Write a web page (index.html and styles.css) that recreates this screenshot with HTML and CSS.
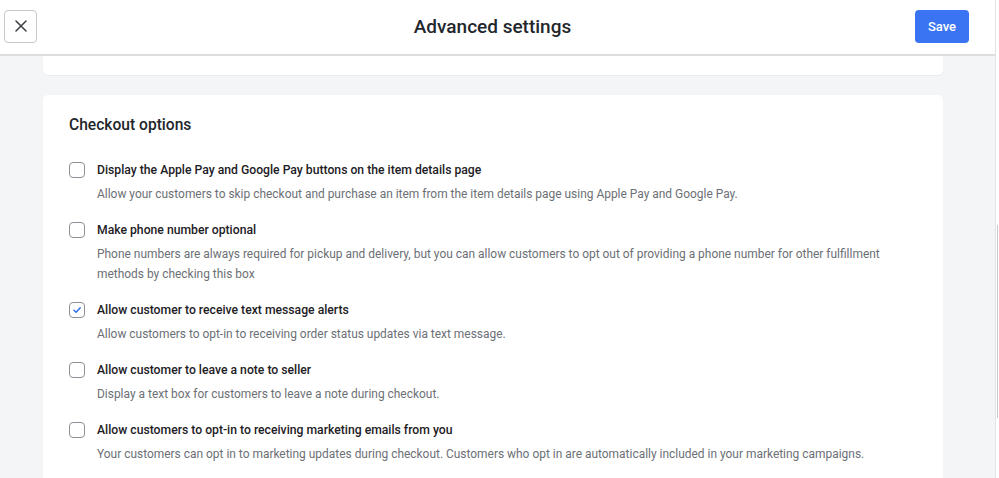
FILE: index.html
```html
<!DOCTYPE html>
<html lang="en">
<head>
<meta charset="utf-8">
<title>Advanced settings</title>
<link rel="stylesheet" href="styles.css">
</head>
<body>
<div class="app">
  <div class="main">
    <header class="topbar">
      <button class="close-btn" aria-label="Close">
        <svg width="12" height="12" viewBox="0 0 12 12"><path d="M1 1L11 11M11 1L1 11" stroke="#3a3d42" stroke-width="1.5" stroke-linecap="round"/></svg>
      </button>
      <h1 class="title">Advanced settings</h1>
      <button class="save-btn">Save</button>
    </header>
    <div class="content">
      <div class="card card-tail"></div>
      <section class="card options">
        <h2 class="section-title">Checkout options</h2>
        <div class="option">
          <span class="checkbox"></span>
          <div class="option-text">
            <div class="option-label">Display the Apple Pay and Google Pay buttons on the item details page</div>
            <div class="option-desc">Allow your customers to skip checkout and purchase an item from the item details page using Apple Pay and Google Pay.</div>
          </div>
        </div>
        <div class="option">
          <span class="checkbox"></span>
          <div class="option-text">
            <div class="option-label">Make phone number optional</div>
            <div class="option-desc">Phone numbers are always required for pickup and delivery, but you can allow customers to opt out of providing a phone number for other fulfillment methods by checking this box</div>
          </div>
        </div>
        <div class="option">
          <span class="checkbox checked">
            <svg width="10" height="10" viewBox="0 0 10 10"><path d="M2 5.2L4.1 7.2L8.2 2.8" fill="none" stroke="#2f6fed" stroke-width="1.5" stroke-linecap="round" stroke-linejoin="round"/></svg>
          </span>
          <div class="option-text">
            <div class="option-label">Allow customer to receive text message alerts</div>
            <div class="option-desc">Allow customers to opt-in to receiving order status updates via text message.</div>
          </div>
        </div>
        <div class="option">
          <span class="checkbox"></span>
          <div class="option-text">
            <div class="option-label">Allow customer to leave a note to seller</div>
            <div class="option-desc">Display a text box for customers to leave a note during checkout.</div>
          </div>
        </div>
        <div class="option">
          <span class="checkbox"></span>
          <div class="option-text">
            <div class="option-label">Allow customers to opt-in to receiving marketing emails from you</div>
            <div class="option-desc">Your customers can opt in to marketing updates during checkout. Customers who opt in are automatically included in your marketing campaigns.</div>
          </div>
        </div>
      </section>
    </div>
  </div>
  <div class="scrollbar"><div class="thumb"></div></div>
</div>
</body>
</html>
```
FILE: styles.css
```css
* { box-sizing: border-box; }
html, body { margin: 0; padding: 0; height: 100%; overflow: hidden; }
body {
  font-family: Roboto, "Noto Sans", "Liberation Sans", sans-serif;
  color: #1d2024;
  background: #ffffff;
}
.app {
  display: flex;
  height: 478px;
}
.main {
  width: 996px;
  border-right: 1px solid #e3e4e6;
  background: #f4f5f7;
  display: flex;
  flex-direction: column;
  overflow: hidden;
}
.scrollbar {
  flex: 1;
  background: #ffffff;
  padding-top: 225px;
  display: flex;
  justify-content: flex-end;
  padding-right: 1px;
}
.thumb {
  width: 1px;
  height: 193px;
  background: #c9c9c9;
}
.topbar {
  height: 56px;
  flex: none;
  background: #ffffff;
  border-bottom: 2px solid #dcdddf;
  display: grid;
  grid-template-columns: 1fr auto 1fr;
  align-items: center;
  padding: 0 26px 2px 4px;
  position: relative;
  z-index: 1;
}
.close-btn {
  justify-self: start;
  width: 33px;
  height: 33px;
  border: 1px solid #c6c8cb;
  border-radius: 4px;
  background: #ffffff;
  display: flex;
  align-items: center;
  justify-content: center;
  padding: 0;
}
.title {
  margin: 0;
  padding-left: 12px;
  font-size: 19px;
  font-weight: 500;
  color: #23272d;
}
.save-btn {
  justify-self: end;
  width: 54px;
  height: 33px;
  border: none;
  border-radius: 4px;
  background: #3a74f2;
  color: #ffffff;
  font-family: inherit;
  font-size: 13px;
  font-weight: 500;
  padding: 0;
}
.content {
  padding: 0 52px 0 43px;
  display: flex;
  flex-direction: column;
  gap: 20px;
}
.card {
  width: 900px;
  background: #ffffff;
  border-radius: 5px;
}
.card-tail {
  height: 19px;
  border-radius: 0 0 5px 5px;
  box-shadow: 0 1px 1px rgba(0,0,0,0.04);
}
.options {
  padding: 18px 26px 20px 26px;
}
.section-title {
  margin: 0 0 23px 0;
  font-size: 15.6px;
  line-height: 24px;
  font-weight: 500;
  color: #22262b;
}
.option {
  display: flex;
  gap: 12px;
  margin-bottom: 16px;
}
.checkbox {
  flex: none;
  width: 16px;
  height: 16px;
  margin-top: 2px;
  border: 1px solid #8d9096;
  border-radius: 4px;
  background: #ffffff;
  display: flex;
  align-items: center;
  justify-content: center;
}
.option-label {
  font-size: 12.2px;
  line-height: 20px;
  font-weight: 500;
  color: #1d2024;
}
.option-desc {
  margin-top: 4px;
  font-size: 11.95px;
  line-height: 20px;
  color: #6c7075;
  max-width: 800px;
}
```
